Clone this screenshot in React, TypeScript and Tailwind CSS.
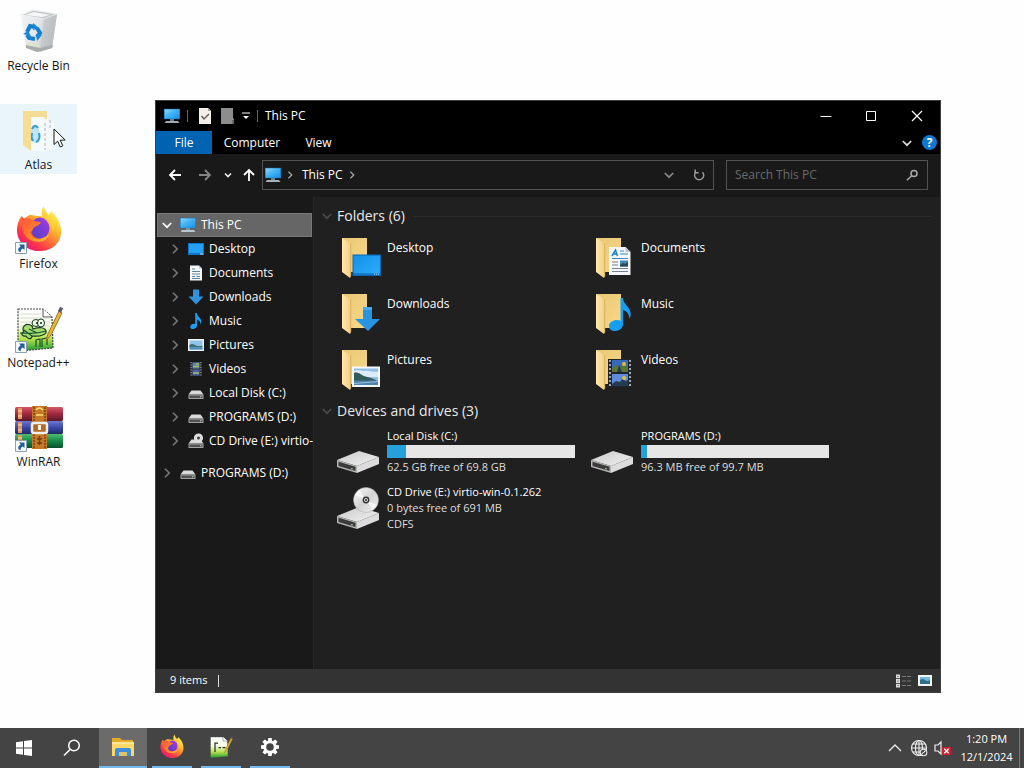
import React from "react";

type IconProps = { className?: string };

const Chevron = ({ className = "" }: IconProps) => (
  <svg viewBox="0 0 10 10" className={`h-[10px] w-[10px] shrink-0 ${className}`} fill="none" stroke="currentColor" strokeWidth="1.6">
    <path d="M3 .8 7.2 5 3 9.2" />
  </svg>
);

const ChevronDown = ({ className = "" }: IconProps) => (
  <svg viewBox="0 0 10 10" className={`h-[10px] w-[10px] shrink-0 ${className}`} fill="none" stroke="currentColor" strokeWidth="1.7">
    <path d="M.8 3 5 7.2 9.2 3" />
  </svg>
);

const MonitorIcon = ({ className = "h-4 w-4" }: IconProps) => (
  <svg viewBox="0 0 16 16" className={`shrink-0 ${className}`}>
    <defs>
      <linearGradient id="monitor" x1="0" y1="0" x2="1" y2="1">
        <stop offset="0" stopColor="#8ed4fb" />
        <stop offset=".5" stopColor="#3fb0f5" />
        <stop offset="1" stopColor="#1793ea" />
      </linearGradient>
    </defs>
    <path d="M0 .8h16v10.4H0z" fill="#1b6fae" />
    <path d="M.6 1.3h14.8v9.4H.6z" fill="url(#monitor)" />
    <path d="M6 11.2h4v1.6H6z" fill="#7d9db3" />
    <path d="M2 13.2h12l1.4 1.6H.6z" fill="#d5e6f0" />
  </svg>
);

const NoteShape = () => (
  <path d="M7.2 0h1.6c.4 2.6 1.8 3.4 3.2 5.2 1.6 2 1.8 4.4.5 6.7.3-2.7-1-4.8-3.5-5.5v6.2c0 1.7-1.5 3-3.4 3.3C3.500 16.200 2.200 15.200 2.200 13.900c0-1.700 1.700-3.200 3.800-3.200.5 0 .9.100 1.200.200z" fill="#1f9df0" />
);

const DriveShape = () => (
  <>
    <path d="M3.500 5.500h9L15.500 9.500H.5z" fill="#d9d9d9" />
    <path d="M.5 9.500h15v4.500H.5z" fill="#a3a3a3" />
    <path d="M1.500 10.500h13v2.500h-13z" fill="#515151" />
    <path d="M12 11.200h1.500v1H12z" fill="#b9e4b2" />
  </>
);

const SmallIcon = ({ kind }: { kind: string }) => {
  if (kind === "pc") return <MonitorIcon />;
  return (
    <svg viewBox="0 0 16 16" className="h-4 w-4 shrink-0">
      {kind === "desktop" && (
        <>
          <path d="M0 2h16v12H0z" fill="#0e77c9" />
          <path d="M1 3h14v9H1z" fill="#24a1f2" />
          <path d="M12 12.500h3v1h-3z" fill="#b8e1fa" />
        </>
      )}
      {kind === "documents" && (
        <>
          <path d="M2 .5h9L14 3.500v12H2z" fill="#f5f7f9" />
          <path d="M11 .5v3h3z" fill="#b8c5cf" />
          <path d="M4 4h3M4 6.500h8M4 9h8M4 11.500h3M8.500 11.500H12M4 13.500h8" stroke="#5e86a5" strokeWidth="1" />
        </>
      )}
      {kind === "downloads" && <path d="M5 .5h6v7h4.500L8 15.500.5 7.500H5z" fill="#2f94dc" />}
      {kind === "music" && <NoteShape />}
      {kind === "pictures" && (
        <>
          <path d="M0 2h16v12H0z" fill="#f2f5f8" />
          <path d="M1.500 3.500h13v9h-13z" fill="#8fc4ea" />
          <path d="M1.500 8c3-2.500 5 .5 8 1s4-.5 5 .5v1h-13z" fill="#3d6e74" />
          <path d="M1.500 10.500h13v2h-13z" fill="#4f8fbd" />
        </>
      )}
      {kind === "videos" && (
        <>
          <path d="M2 1h12v14H2z" fill="#2c2e33" />
          <path d="M4.500 1.500h7v6h-7z" fill="#5a83ac" />
          <path d="M4.500 8.500h7v6h-7z" fill="#4964a8" />
          <path d="M5 5.500h6M8 3h3M5 12h6" stroke="#a5b86a" strokeWidth="1.300" />
          <path d="M3.200 1v14M12.800 1v14" stroke="#9ba0a8" strokeWidth="1" strokeDasharray="1 1.500" />
        </>
      )}
      {kind === "drive" && <DriveShape />}
      {kind === "cd" && (
        <>
          <g transform="translate(0 1)"><DriveShape /></g>
          <circle cx="10.500" cy="5" r="4.600" fill="#dedede" />
          <circle cx="10.500" cy="5" r="1.500" fill="#444" />
        </>
      )}
    </svg>
  );
};

const FolderIcon = ({ kind }: { kind: string }) => (
  <svg viewBox="0 0 48 48" className="h-12 w-12 shrink-0">
    <defs>
      <linearGradient id="folder-back" x1="0" y1="0" x2="1" y2="1">
        <stop offset="0" stopColor="#e9c873" />
        <stop offset="1" stopColor="#f8d98b" />
      </linearGradient>
      <linearGradient id="folder-front" x1="0" y1="0" x2="1" y2="0">
        <stop offset="0" stopColor="#ffe9ad" />
        <stop offset="1" stopColor="#f3d182" />
      </linearGradient>
      <linearGradient id="screen" x1="0" y1="0" x2="1" y2="1">
        <stop offset="0" stopColor="#1590e8" />
        <stop offset="1" stopColor="#2bacfa" />
      </linearGradient>
    </defs>
    <path d="M5 4h25v34H10z" fill="url(#folder-back)" />
    <path d="M5 4 13 9v35l-8-6z" fill="url(#folder-front)" />
    <path d="M13 9v35l1.200-2V10z" fill="#d8b567" />
    {kind === "desktop" && (
      <>
        <path d="M15.500 20.500h28.500v21.500H15.500z" fill="#0b67b2" />
        <path d="M16.500 21.500h26.500v18H16.500z" fill="url(#screen)" />
        <path d="M16.500 39.500h26.500v1.500H16.500z" fill="#127cca" />
        <path d="M37 40.200h5" stroke="#b9e1ff" strokeDasharray="1 1" />
      </>
    )}
    {kind === "documents" && (
      <>
        <path d="M18 13h16.500l5 5v23H18z" fill="#f5f7fa" />
        <path d="M34.500 13v5h5z" fill="#bac5ce" />
        <path d="m21 22 3.500-6 2 6M22 20h4" stroke="#1d83c5" strokeWidth="1.500" fill="none" />
        <path d="M29 17h4M29 20h8M21 24.500h16" stroke="#318bcc" strokeWidth="1.200" />
        <path d="M21 28h6M21 31h6M21 34.500h16M21 37.500h16" stroke="#718292" strokeWidth="1.200" />
        <path d="M29 26.500h8v6h-8z" fill="#4785b4" />
        <path d="m29 31 3-2 2 1 3-2v4.500h-8z" fill="#27495d" />
      </>
    )}
    {kind === "downloads" && (
      <>
        <path d="M26 17h9v12h8L31 41 18 29h8z" fill="#2794e2" />
        <path d="M26 17h9v3h-9z" fill="#45a9ee" />
      </>
    )}
    {kind === "music" && (
      <path d="M29.500 8H32c.5 5 3 6 5.500 10 2.400 4 3 7 1 11-.4-5-2.500-8-6.500-9v14c0 4-3.500 7-7.500 7-4 0-6.500-2-6.500-5 0-3.500 4-6 8-6 1.400 0 2.500.300 3.500.800z" fill="#169ef2" />
    )}
    {kind === "pictures" && (
      <>
        <path d="M15 20.500h28V41H15z" fill="#f5f8fb" />
        <path d="M17 22.500h24V39H17z" fill="#8fc0ea" />
        <path d="M17 25c4-2 7 0 10 0 4-1 8 1 14 1v5H17z" fill="#dcedf9" />
        <path d="M17 27c3-1 5 0 8 2s9 2.500 14 5v2H17z" fill="#315c59" />
        <path d="M17 34.500h24V39H17z" fill="#4f81ad" />
        <path d="m17 37.500 24-2" stroke="#98c0d8" />
      </>
    )}
    {kind === "videos" && (
      <>
        <path d="M17 13h24v28H17z" fill="#20242b" />
        <path d="M21 14h16v12H21z" fill="#3768b9" />
        <path d="M21 28h16v12H21z" fill="#5f8bda" />
        <path d="m21 22 4-3 4 3 3-5 5 5v4H21z" fill="#5a7434" />
        <circle cx="33" cy="18" r="2" fill="#e3bf2f" />
        <path d="m26 26 2-7 3 7m-10 12 4-3 4 1 3-4 2 3 3-1v6H21z" fill="#263b50" />
        <circle cx="33" cy="32" r="2" fill="#dcc13c" />
        <path d="M19 14v26M39 14v26" stroke="#aeb5c0" strokeWidth="1.800" strokeDasharray="2 2" />
      </>
    )}
  </svg>
);

const LargeDrive = ({ disc = false }: { disc?: boolean }) => (
  <svg viewBox="0 0 48 48" className="h-12 w-12 shrink-0">
    <defs>
      <linearGradient id="drive-top" x1="0" y1="0" x2="1" y2="1">
        <stop offset="0" stopColor="#c9c9c9" />
        <stop offset="1" stopColor="#f2f2f2" />
      </linearGradient>
      <linearGradient id="disc" x1="0" y1="0" x2="1" y2="1">
        <stop offset="0" stopColor="#fff" />
        <stop offset=".5" stopColor="#d2d2d2" />
        <stop offset="1" stopColor="#f5f5f5" />
      </linearGradient>
    </defs>
    <g transform="translate(0 2)">
      <path d="M0 32 22 23l20 6-22 9z" fill="url(#drive-top)" />
      <path d="m0 32 20 6v7L0 39z" fill="#b5b5b5" />
      <path d="m1.500 33.700 17 5v4.300l-17-5z" fill="#3b3b3b" />
      <path d="M20 38l22-9v7l-22 9z" fill="#dcdcdc" />
      <path d="m14 40.400 2 .6" stroke="#9fd098" />
    </g>
    {disc && (
      <g transform="translate(0 1)">
        <circle cx="29" cy="17" r="12.500" fill="url(#disc)" stroke="#a6a6a6" strokeWidth=".5" />
        <path d="m29 17-11-5 4-5zM29 17l11 5-4 5z" fill="#fff" opacity=".7" />
        <circle cx="29" cy="17" r="3.400" fill="#333" />
        <circle cx="29" cy="17" r="2" fill="#ddd" />
        <circle cx="29" cy="17" r="1" fill="#222" />
      </g>
    )}
  </svg>
);

const FirefoxIcon = ({ className = "" }: IconProps) => (
  <svg viewBox="0 2 48 48" className={`overflow-visible ${className}`}>
    <defs>
      <linearGradient id="ff-body" x1=".8" y1=".1" x2=".2" y2=".9">
        <stop offset="0" stopColor="#fff15a" />
        <stop offset=".28" stopColor="#ffc02d" />
        <stop offset=".55" stopColor="#ff7937" />
        <stop offset=".82" stopColor="#ff334b" />
        <stop offset="1" stopColor="#e51d70" />
      </linearGradient>
      <linearGradient id="ff-globe" x1="1" y1="0" x2="0" y2="1">
        <stop offset="0" stopColor="#a83bea" />
        <stop offset="1" stopColor="#4e3fbd" />
      </linearGradient>
      <linearGradient id="ff-head" x1="0" y1="0" x2="1" y2="1">
        <stop offset="0" stopColor="#ff4d3d" />
        <stop offset=".6" stopColor="#ff8b28" />
        <stop offset="1" stopColor="#ffc13a" />
      </linearGradient>
    </defs>
    <path d="M29 1c1 5 3 6 5 9 2-1 2-3 2-4 7 6 11 13 11 22 0 12-10 20-23 20S1 38 1 26c0-6 2-11 5-15l1 5c2-3 5-5 8-6 3 1 8 1 12 2-1-4 0-8 2-11z" fill="url(#ff-body)" />
    <ellipse cx="25" cy="24" rx="10" ry="11" fill="url(#ff-globe)" />
    <path d="M6 11c1 2 2 3 3 4 3-2 7-1 9 1 2 1 6 1 8 2-1 2-4 4-7 5-2 2-1 4-4 5 1 5 5 8 10 7 5-1 7-3 10-4-3 6-8 8-13 7C11 38 5 29 6 11z" fill="url(#ff-head)" />
    <path d="M31 14c5 3 8 8 7 15 4-6 2-13-7-15z" fill="#ffd43d" opacity=".85" />
  </svg>
);

const NotepadIcon = ({ className = "", small = false }: IconProps & { small?: boolean }) => (
  <svg viewBox="0 0 48 48" className={className}>
    <defs>
      <linearGradient id="np-paper" x1="0" y1="0" x2="0" y2="1">
        <stop offset="0" stopColor="#fff" />
        <stop offset=".4" stopColor="#f8fbe6" />
        <stop offset=".72" stopColor="#b4df4c" />
        <stop offset="1" stopColor="#199c32" />
      </linearGradient>
    </defs>
    <path d="M3 4h25l9 8 1 31L3 46z" fill="url(#np-paper)" stroke="#41464b" strokeWidth="1.200" strokeDasharray="2 1" />
    <path d="M28 4v8h9" fill="#fff" stroke="#555" />
    {!small && <path d="M5 9h21M5 13h29M5 17h30M5 21h30" stroke="#c9d0d4" strokeWidth=".8" />}
    {small ? (
      <path d="M12 15v19M19 25h5M27 25h6M12 16h6" stroke="#29322c" strokeWidth="2.500" />
    ) : (
      <>
        <path d="M17 21c-6-4-11 1-8 6-4 1-2 5 2 4 2 4 6 3 6 0 9 1 15-2 14-5-1-4-7-4-13-2z" fill="#a5dc74" stroke="#16391f" strokeWidth="1.200" />
        <ellipse cx="21" cy="18" rx="4" ry="3.500" fill="#efffe5" stroke="#16391f" />
        <ellipse cx="26" cy="18" rx="3.500" ry="4" fill="#efffe5" stroke="#16391f" />
        <circle cx="22" cy="18" r="1" fill="#222" /><circle cx="26" cy="18" r="1" fill="#222" />
        <path d="M5 28c8 0 13 2 26-2M9 25l8 6M14 24l8 4M21 42v-7l4-1v8m2 0v-8l5-1v7" fill="none" stroke="#16532b" strokeWidth="1.200" />
      </>
    )}
    <path d="m31 36 2-7L44 6l3 2-11 22z" fill="#e2b93f" stroke="#9a7222" />
    <path d="m43 6 2-4 3 1-2 5z" fill="#575466" />
  </svg>
);

const ShortcutArrow = () => (
  <svg viewBox="0 0 12 12" className="absolute bottom-0 left-0 h-3 w-3">
    <path d="M.5.5h11v11H.5z" fill="#f7fafb" stroke="#8ba0b2" />
    <path d="M4 2.500h5.500V8L7.700 6.400C5.800 7.500 5.500 8.500 5.700 10.300 2.300 9 2.500 6 5.700 4.400z" fill="#235f9c" />
  </svg>
);

const RecycleIcon = () => (
  <svg viewBox="0 0 48 48" className="h-12 w-12">
    <defs>
      <linearGradient id="bin" x1="0" y1="0" x2="1" y2=".3">
        <stop offset="0" stopColor="#f3f5f6" />
        <stop offset=".55" stopColor="#e2e4e6" />
        <stop offset="1" stopColor="#b5b9bc" />
      </linearGradient>
    </defs>
    <path d="m6 7 12-5 24 4-5 34-16 4-10-4z" fill="url(#bin)" />
    <path d="m6 7 12-5 24 4-13 5z" fill="#c5c9cb" stroke="#eef0f1" strokeWidth="1.200" />
    <path d="m10 7 9-3 16 3-8 2z" fill="#f5f6f6" />
    <path d="m29 11 13-5-5 34-12 4z" fill="#bfc2c5" opacity=".6" />
    <path d="m11 37 14 3 13-3-1 3-14 4-12-4z" fill="#a8abaa" />
    <path d="m12 34 12 2v3l-12-2z" fill="#dce4cc" />
    <g fill="none" stroke="#137fd0" strokeWidth="4">
      <path d="m12 24 3-6 5 1" /><path d="m22 20 3 5-3 4" /><path d="m20 31-6-1-2-3" />
    </g>
    <path d="m18 15 6 5-6 2zM27 27l-5 6-1-7zM8 26l5-3 3 5z" fill="#1787d8" />
  </svg>
);

const AtlasIcon = () => (
  <svg viewBox="0 0 48 48" className="h-12 w-12">
    <path d="M8 4h24v34H15z" fill="#f3dc94" />
    <path d="M16 10h13l3 4v30H16z" fill="#f4fafc" />
    <path d="m29 14 4-3 3 4 3-3v31l-10-1z" fill="#f5f8f9" />
    <path d="M30 16v27M35 13v10" stroke="#aab5bd" strokeDasharray="3 2" />
    <ellipse cx="20" cy="27" rx="4.500" ry="9" fill="#bfe6f7" />
    <path d="M17 22c2-4 4-4 6-1m1 5c1 4 0 8-3 9m-3-1c-2-3-2-5-1-8" fill="none" stroke="#399ed3" strokeWidth="2.200" />
    <path d="m8 4 8 6v34l-8-6z" fill="#f7dc91" />
  </svg>
);

const WinRarIcon = () => (
  <svg viewBox="0 0 48 48" className="h-12 w-12">
    <defs>
      <linearGradient id="rar-red" x2="0" y2="1"><stop stopColor="#d55768" /><stop offset=".45" stopColor="#a52b43" /><stop offset="1" stopColor="#591728" /></linearGradient>
      <linearGradient id="rar-blue" x2="0" y2="1"><stop stopColor="#6d78d2" /><stop offset=".5" stopColor="#3c48a5" /><stop offset="1" stopColor="#1d2a64" /></linearGradient>
      <linearGradient id="rar-green" x2="0" y2="1"><stop stopColor="#4ebc72" /><stop offset=".5" stopColor="#168848" /><stop offset="1" stopColor="#07502b" /></linearGradient>
    </defs>
    <rect y="3" width="48" height="14" rx="1.500" fill="url(#rar-red)" />
    <rect y="17" width="48" height="13" rx="1.500" fill="url(#rar-blue)" />
    <rect y="30" width="48" height="14" rx="1.500" fill="url(#rar-green)" />
    <path d="M5 4v11M5 18v11M5 31v11" stroke="#df9361" strokeWidth="4" />
    <path d="M3 7h4M3 12h4M3 21h4M3 26h4M3 34h4" stroke="#ffe4a1" />
    <path d="M17 2h15v43H17z" fill="#c67826" />
    <path d="M19 3v41M30 3v41" stroke="#774318" strokeWidth="1.500" strokeDasharray="2 1" />
    <path d="M21 6q3-4 7 0M21 11h7" stroke="#ffdd75" strokeWidth="1.500" fill="none" />
    <rect x="17" y="19" width="15" height="10" rx="2" fill="#b46a26" stroke="#eef0ee" strokeWidth="2.500" />
    <path d="M24.500 21v5" stroke="#f5f5e9" strokeWidth="3" />
    <path d="M24.500 32v9M22 35h5M22 39h5" stroke="#6f3b1a" strokeWidth="1.500" />
  </svg>
);

const DesktopItem = ({ label, icon, shortcut, active, children }: { label: string; icon: React.ReactNode; shortcut?: boolean; active?: boolean; children?: React.ReactNode }) => (
  <button className={`relative flex h-[70px] w-[77px] flex-col items-center gap-px pt-[3px] ${active ? "bg-[#e9f5fb]" : ""}`}>
    <span className="relative grid h-12 w-12 place-items-center">{icon}{shortcut && <ShortcutArrow />}</span>
    <span className="whitespace-nowrap text-[12px] leading-[18px] text-[#161616]">{label}</span>
    {children}
  </button>
);

const tree = [
  ["desktop", "Desktop"],
  ["documents", "Documents"],
  ["downloads", "Downloads"],
  ["music", "Music"],
  ["pictures", "Pictures"],
  ["videos", "Videos"],
  ["drive", "Local Disk (C:)"],
  ["drive", "PROGRAMS (D:)"],
  ["cd", "CD Drive (E:) virtio-win-0.1.262"],
];

const folders = [
  ["desktop", "Desktop"],
  ["documents", "Documents"],
  ["downloads", "Downloads"],
  ["music", "Music"],
  ["pictures", "Pictures"],
  ["videos", "Videos"],
];

const GroupTitle = ({ children }: { children: React.ReactNode }) => (
  <h2 className="flex h-[22px] items-center text-[14px] leading-[22px] text-[#e9e9e9]">
    <ChevronDown className="mr-[5px] text-[#4a4a4a]" />
    {children}
  </h2>
);

const Drive = ({ name, used, free }: { name: string; used: number; free: string }) => (
  <button className="flex h-14 items-start gap-[2px] text-left">
    <LargeDrive />
    <span className="flex flex-col pt-[2px]">
      <span className="text-[11px] leading-4 text-white">{name}</span>
      <span className="mt-px flex h-[13px] w-[188px] bg-[#e6e6e6]">
        <span className="bg-[#26a0da]" style={{ width: `${used}%` }} />
      </span>
      <span className="mt-px text-[11px] leading-4 text-[#dedede]">{free}</span>
    </span>
  </button>
);

const TitleBar = () => (
  <header className="flex h-[30px] items-center bg-black text-white">
    <div className="flex flex-1 items-center pl-2">
      <MonitorIcon />
      <span className="ml-[7px] h-3 w-px bg-[#666]" />
      <button aria-label="Properties" className="ml-[10px]">
        <svg viewBox="0 0 14 16" className="h-4 w-[14px]">
          <path d="M1 0h9l3 3v13H1z" fill="#f3efe8" /><path d="M10 0v3h3z" fill="#aaa39b" />
          <path d="m3.500 8 2.500 3 5-5" fill="none" stroke="#665f59" strokeWidth="1.500" />
        </svg>
      </button>
      <button aria-label="New folder" className="ml-2">
        <svg viewBox="0 0 14 16" className="h-4 w-[14px]"><path d="M1 0h12v10l1 1v5H1z" fill="#8d8d8d" /><path d="M12 12h2v4h-2z" fill="#666" /></svg>
      </button>
      <button aria-label="Customize toolbar" className="ml-2">
        <svg viewBox="0 0 8 8" className="h-2 w-2"><path d="M0 1h8" stroke="#fff" /><path d="M1 4h6L4 7z" fill="#fff" /></svg>
      </button>
      <span className="mr-[7px] ml-[7px] h-3 w-px bg-[#666]" />
      <h1 className="text-[12px]">This PC</h1>
    </div>
    <button aria-label="Minimize" className="grid h-full w-[45px] place-items-center">
      <svg viewBox="0 0 12 12" className="h-3 w-3"><path d="M.5 6.500h11" stroke="#fff" /></svg>
    </button>
    <button aria-label="Maximize" className="grid h-full w-[46px] place-items-center">
      <svg viewBox="0 0 12 12" className="h-3 w-3"><path d="M1.500 1.500h9v9h-9z" fill="none" stroke="#fff" /></svg>
    </button>
    <button aria-label="Close" className="grid h-full w-[46px] place-items-center">
      <svg viewBox="0 0 12 12" className="h-3 w-3"><path d="m1 1 10 10M11 1 1 11" stroke="#fff" strokeWidth="1.200" /></svg>
    </button>
  </header>
);

const Arrow = ({ className = "", up = false }: IconProps & { up?: boolean }) => (
  <svg viewBox="0 0 14 14" className={`h-[14px] w-[14px] ${className}`} fill="none" stroke="currentColor" strokeWidth="1.800">
    {up ? <path d="M7 13V2M2 7l5-5 5 5" /> : <path d="M13 7H2M7 2 2 7l5 5" />}
  </svg>
);

const Explorer = () => (
  <main className="absolute top-[100px] right-[83px] bottom-[35px] left-[155px] flex flex-col overflow-hidden border border-[#3f3f3f] bg-[#191919] text-[12px] text-white">
    <TitleBar />
    <nav aria-label="Ribbon" className="flex h-[23px] items-center bg-black">
      <button className="h-full w-14 bg-[#0063b1]">File</button>
      <button className="h-full w-20">Computer</button>
      <button className="h-full w-[53px]">View</button>
      <div className="flex flex-1 items-center justify-end gap-[10px] pr-[3px]">
        <button aria-label="Expand ribbon" className="flex"><ChevronDown className="text-[#ddd]" /></button>
        <button aria-label="Help" className="grid h-[15px] w-[15px] place-items-center rounded-full bg-[#0f78d0] text-[12px] leading-none font-bold">?</button>
      </div>
    </nav>
    <div className="flex h-[43px] items-center px-3 pb-[2px]">
      <button aria-label="Back" className="flex"><Arrow /></button>
      <button aria-label="Forward" className="ml-4 flex"><Arrow className="rotate-180 text-[#858585]" /></button>
      <button aria-label="Recent locations" className="ml-[12px] flex">
        <svg viewBox="0 0 8 8" className="h-2 w-2" fill="none" stroke="#eee" strokeWidth="1.600"><path d="m1 2.500 3 3 3-3" /></svg>
      </button>
      <button aria-label="Up" className="ml-[10px] flex"><Arrow up /></button>
      <div className="ml-[6px] flex h-[30px] flex-1 items-center border border-[#535353] pl-[2px]">
        <MonitorIcon />
        <Chevron className="ml-1 h-2! text-[#aaa]" />
        <span className="ml-[7px]">This PC</span>
        <Chevron className="ml-1 h-2! text-[#aaa]" />
        <button aria-label="Previous locations" className="ml-auto flex"><ChevronDown className="text-[#888]" /></button>
        <button aria-label="Refresh" className="mr-[7px] ml-[18px] flex">
          <svg viewBox="0 0 14 14" className="h-[14px] w-[14px]" fill="none" stroke="#999" strokeWidth="1.600"><path d="M10.500 4.200A4.500 4.500 0 1 1 4 4" /><path d="M3.200 1.500v3.300h3.500" /></svg>
        </button>
      </div>
      <label className="ml-3 flex h-[30px] w-[202px] items-center border border-[#535353] px-2">
        <input aria-label="Search This PC" placeholder="Search This PC" className="min-w-0 flex-1 bg-transparent text-[12px] outline-none placeholder:text-[#6b6b6b]" />
        <svg viewBox="0 0 14 14" className="h-[14px] w-[14px]" fill="none" stroke="#aaa" strokeWidth="1.500"><circle cx="9" cy="5.500" r="3" /><path d="m6.800 7.700-5 4.500" /></svg>
      </label>
    </div>
    <div className="flex min-h-0 flex-1">
      <aside className="w-[158px] shrink-0 overflow-hidden border-r border-[#292929] pt-4">
        <button className="ml-px flex h-6 w-[155px] items-center border border-[#777] bg-[#666] pl-1">
          <ChevronDown /><span className="ml-2 flex"><SmallIcon kind="pc" /></span><span className="ml-[5px]">This PC</span>
        </button>
        {tree.map(([kind, label], i) => (
          <button key={i} className="flex h-6 w-full items-center overflow-hidden pl-[14px] whitespace-nowrap">
            <Chevron className="text-[#777]" /><span className="ml-2 flex"><SmallIcon kind={kind} /></span><span className="ml-[5px]">{label}</span>
          </button>
        ))}
        <button className="mt-2 flex h-6 w-full items-center pl-[6px] whitespace-nowrap">
          <Chevron className="text-[#777]" /><span className="ml-2 flex"><SmallIcon kind="drive" /></span><span className="ml-[5px]">PROGRAMS (D:)</span>
        </button>
      </aside>
      <section className="min-w-0 flex-1 bg-[#202020] px-2 pt-2">
        <div className="flex items-center gap-2">
          <GroupTitle>Folders (6)</GroupTitle>
          <span className="h-px flex-1 bg-[#2c2c2c]" />
        </div>
        <div className="mt-[3px] grid grid-cols-[repeat(auto-fill,254px)] pl-[15px]">
          {folders.map(([kind, label]) => (
            <button key={kind} className="flex h-14 items-start gap-[2px] pt-1 text-left">
              <FolderIcon kind={kind} /><span className="pt-[6px] leading-4">{label}</span>
            </button>
          ))}
        </div>
        <div className="mt-[2px]"><GroupTitle>Devices and drives (3)</GroupTitle></div>
        <div className="mt-1 grid grid-cols-[repeat(auto-fill,254px)] pl-[15px]">
          <Drive name="Local Disk (C:)" used={10} free="62.5 GB free of 69.8 GB" />
          <Drive name="PROGRAMS (D:)" used={3} free="96.3 MB free of 99.7 MB" />
          <button className="flex h-14 items-start gap-[2px] text-left">
            <LargeDrive disc />
            <span className="flex flex-col pt-[2px] text-[11px] leading-4 whitespace-nowrap text-[#dedede]">
              <span className="text-white">CD Drive (E:) virtio-win-0.1.262</span><span>0 bytes free of 691 MB</span><span>CDFS</span>
            </span>
          </button>
        </div>
      </section>
    </div>
    <footer className="flex h-[23px] items-center bg-[#333] pr-2 pl-[14px] text-[11px]">
      <span>9 items</span><span className="ml-[11px] h-3 w-px bg-[#ddd]" />
      <button aria-label="Details view" className="ml-auto">
        <svg viewBox="0 0 16 14" className="h-[14px] w-4"><path d="M0 .5h4v13H0z" fill="#ddd" /><path d="M0 4.500h4M0 9.500h4" stroke="#555" /><path d="M6 2.500h4M11 2.500h4M6 7h4M11 7h4M6 11.500h4M11 11.500h4" stroke="#777" /><path d="M1.500 2.500h1M1.500 7h1M1.500 11.500h1" stroke="#333" /></svg>
      </button>
      <button aria-label="Large icons view" className="ml-[6px]">
        <svg viewBox="0 0 14 12" className="h-3 w-[14px]"><path d="M0 0h14v11H0z" fill="#eff6fb" /><path d="M2 2h10v7H2z" fill="#77b9e0" /><path d="M2 5q3-2 5 0t5 0v4H2z" fill="#326e87" /></svg>
      </button>
    </footer>
  </main>
);

const TaskButton = ({ label, active, children }: { label: string; active?: boolean; children: React.ReactNode }) => (
  <button aria-label={label} className={`flex h-10 w-12 flex-col items-center ${active ? "bg-[#6b6b6b]" : ""}`}>
    <span className="grid flex-1 place-items-center">{children}</span>
    <span className={`h-[2px] bg-[#76b9ed] ${active ? "w-full" : "w-10"}`} />
  </button>
);

const gearTeeth = [0, 45, 90, 135, 180, 225, 270, 315];

const Taskbar = () => (
  <footer className="flex h-10 items-center bg-[#444] text-white">
    <button aria-label="Start" className="grid h-10 w-12 place-items-center">
      <svg viewBox="0 0 16 16" className="h-4 w-4" fill="#fff"><path d="M0 2.200 7 1.200v6.300H0zM8 1l8-1v7.500H8zM0 8.500h7v6.300L0 13.800zM8 8.500h8V16l-8-1z" /></svg>
    </button>
    <button aria-label="Search" className="mr-[3px] grid h-10 w-12 place-items-center">
      <svg viewBox="0 0 18 18" className="h-[18px] w-[18px]" fill="none" stroke="#fff" strokeWidth="1.500"><circle cx="11" cy="6.500" r="5.300" /><path d="M7.300 10.300 1 16.500" /></svg>
    </button>
    <div className="flex gap-px">
      <TaskButton label="File Explorer" active>
        <svg viewBox="0 0 24 20" className="h-5 w-6">
          <path d="M1 1h8l2 2h11v16H1z" fill="#e4ac28" /><path d="M1 5h22v14H1z" fill="#ffd766" /><path d="M1 5h22v2H1z" fill="#fce597" />
          <path d="M4 19v-6q0-2 2-2h12q2 0 2 2v6h-4v-4H8v4z" fill="#3e8dd8" /><path d="M8 15h8v4H8z" fill="#dbc36c" />
        </svg>
      </TaskButton>
      <TaskButton label="Firefox"><FirefoxIcon className="h-6 w-6" /></TaskButton>
      <TaskButton label="Notepad++"><NotepadIcon small className="h-6 w-6" /></TaskButton>
      <TaskButton label="Settings">
        <svg viewBox="0 0 20 20" className="h-5 w-5" fill="none" stroke="#fff">
          <circle cx="10" cy="10" r="5.200" strokeWidth="2.800" />
          {gearTeeth.map((a) => <path key={a} d="M8.300 1h3.400l.4 3H7.900z" fill="#fff" stroke="none" transform={`rotate(${a} 10 10)`} />)}
        </svg>
      </TaskButton>
    </div>
    <div className="ml-auto flex h-full items-center">
      <button aria-label="Show hidden icons"><svg viewBox="0 0 14 8" className="h-2 w-[14px]" fill="none" stroke="#eee" strokeWidth="1.300"><path d="m1 7 6-6 6 6" /></svg></button>
      <button aria-label="Network" className="ml-2">
        <svg viewBox="0 0 18 18" className="h-[18px] w-[18px]" fill="none" stroke="#f1f1f1" strokeWidth="1.100">
          <circle cx="9" cy="9" r="7.500" /><ellipse cx="9" cy="9" rx="3.500" ry="7.500" /><path d="M1.500 9h15M2.500 5h13M2.500 13h9M9 1.500v15" />
          <circle cx="13.500" cy="13.500" r="3.300" fill="#444" /><path d="m11.300 15.700 4.400-4.400" />
        </svg>
      </button>
      <button aria-label="Muted" className="ml-[6px]">
        <svg viewBox="0 0 18 16" className="h-4 w-[18px]"><path d="M1 5h3l3-3v12l-3-3H1z" fill="none" stroke="#eee" strokeWidth="1.200" /><path d="M8 7h9v8H8z" fill="#c9202f" /><path d="m10.300 8.800 4.400 4.400m0-4.400-4.400 4.400" stroke="#fff" strokeWidth="1.500" /></svg>
      </button>
      <button className="ml-[6px] w-[57px] text-center text-[11px] leading-[18px] whitespace-nowrap">
        <span className="block">1:20 PM</span><span className="block">12/1/2024</span>
      </button>
      <span className="ml-1 h-full w-[5px] border-l border-[#777]" />
    </div>
  </footer>
);

export default function App() {
  return (
    <div className="flex h-screen flex-col overflow-hidden bg-[#fefefe] font-['Open_Sans','Noto_Sans',sans-serif]">
      <div className="relative flex-1">
        <div className="flex w-[77px] flex-col gap-[29px] pt-[5px]">
          <DesktopItem label="Recycle Bin" icon={<RecycleIcon />} />
          <DesktopItem label="Atlas" icon={<AtlasIcon />} active>
            <svg viewBox="0 0 14 20" className="absolute top-6 left-[53px] h-5 w-[14px]"><path d="M1 1v15.500l3.600-3.300 2.700 5.800 2.500-1.200-2.600-5.600 5-.2z" fill="#fff" stroke="#171717" /></svg>
          </DesktopItem>
          <DesktopItem label="Firefox" icon={<FirefoxIcon className="h-[46px] w-[46px]" />} shortcut />
          <DesktopItem label="Notepad++" icon={<NotepadIcon className="h-12 w-12" />} shortcut />
          <DesktopItem label="WinRAR" icon={<WinRarIcon />} shortcut />
        </div>
        <Explorer />
      </div>
      <Taskbar />
    </div>
  );
}
